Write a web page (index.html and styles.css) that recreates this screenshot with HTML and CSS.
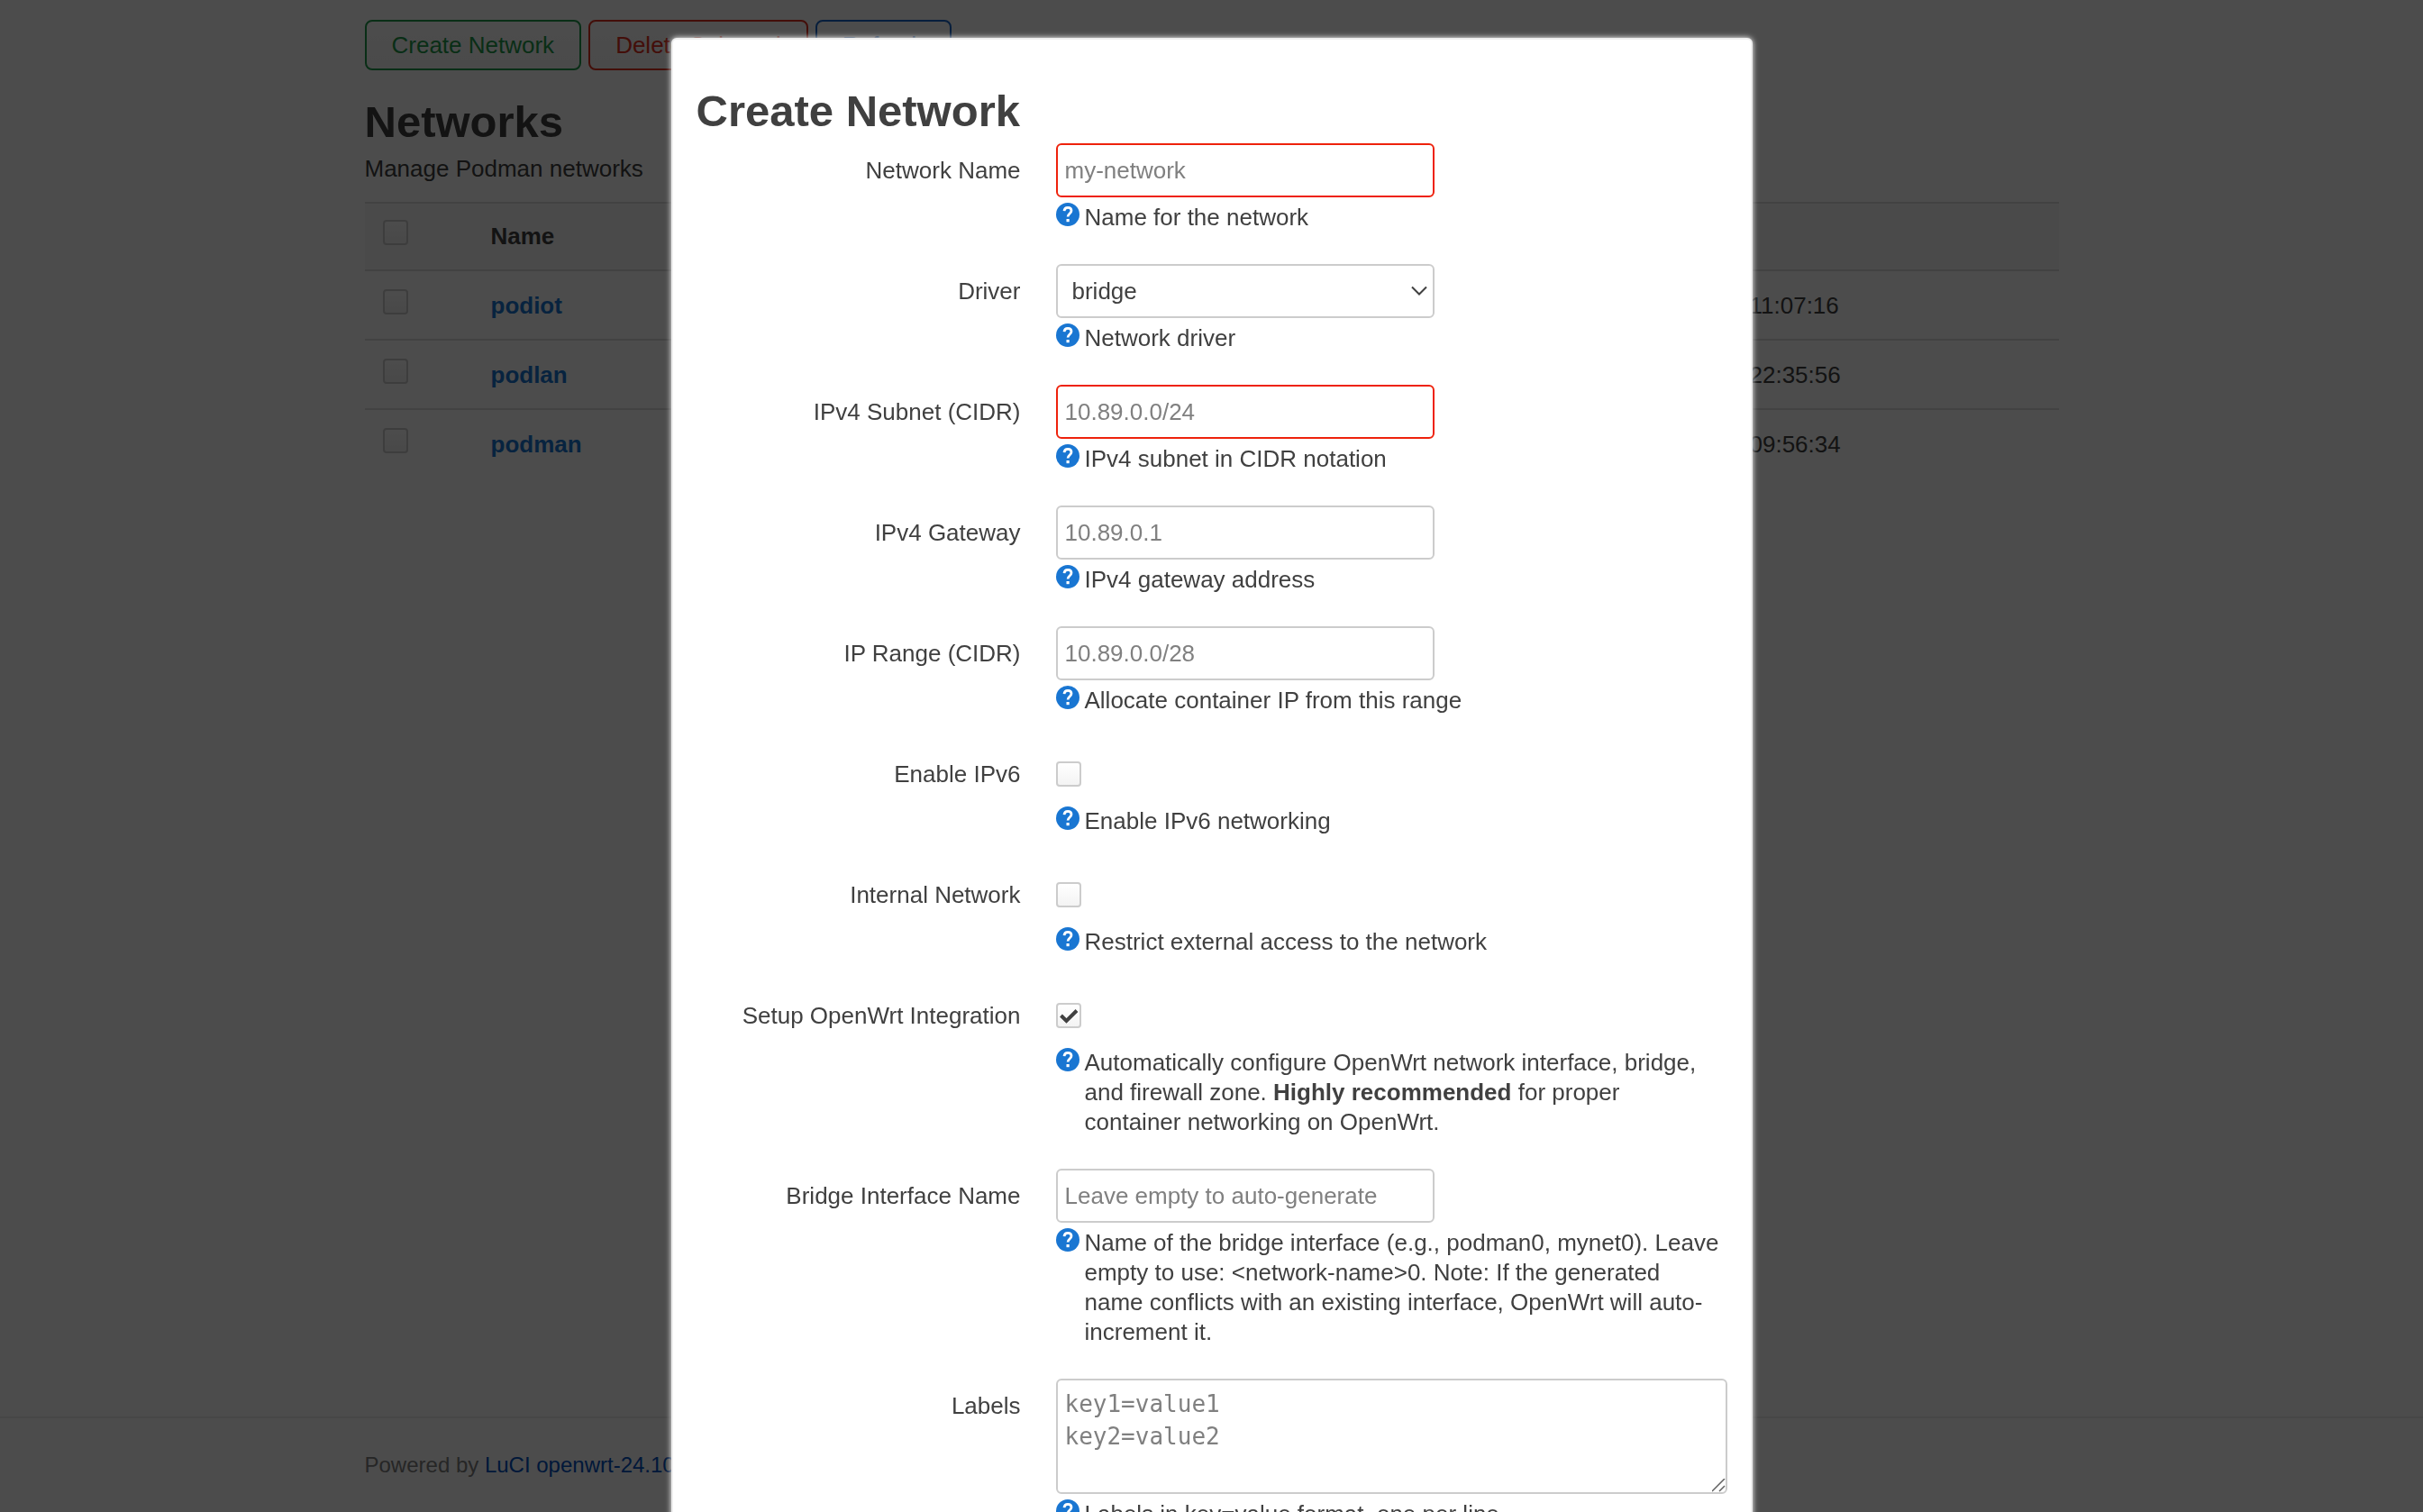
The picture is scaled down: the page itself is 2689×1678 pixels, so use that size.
FILE: index.html
```html
<!DOCTYPE html>
<html lang="en">
<head>
<meta charset="utf-8">
<title>Networks - LuCI</title>
<link rel="stylesheet" href="styles.css">
</head>
<body>
<svg class="sprite" aria-hidden="true">
  <symbol id="help" viewBox="0 0 26 26">
    <circle cx="13" cy="13" r="13" fill="#1976d2"/>
    <path d="M9 9.200C9.200 6.600 10.800 5.300 13 5.300c2.400 0 4 1.400 4 3.500 0 3.200-3.900 3.300-3.900 6.700" fill="none" stroke="#fff" stroke-width="2.800"/>
    <rect x="11.500" y="18" width="3.200" height="3.200" fill="#fff"/>
  </symbol>
</svg>

<main class="container">
  <div class="toolbar">
    <button class="btn btn-positive" type="button">Create Network</button>
    <button class="btn btn-negative" type="button">Delete Selected</button>
    <button class="btn btn-action" type="button">Refresh</button>
  </div>
  <h2 class="heading">Networks</h2>
  <p class="intro">Manage Podman networks</p>
  <table class="table">
    <thead>
      <tr><th class="col-check"><input class="check" type="checkbox" aria-label="Select all"></th><th class="col-name">Name</th><th></th></tr>
    </thead>
    <tbody>
      <tr><td><input class="check" type="checkbox" aria-label="Select podiot"></td><td><a class="net" href="#podiot">podiot</a></td><td class="time">11:07:16</td></tr>
      <tr><td><input class="check" type="checkbox" aria-label="Select podlan"></td><td><a class="net" href="#podlan">podlan</a></td><td class="time">22:35:56</td></tr>
      <tr><td><input class="check" type="checkbox" aria-label="Select podman"></td><td><a class="net" href="#podman">podman</a></td><td class="time">09:56:34</td></tr>
    </tbody>
  </table>
</main>

<footer class="footer">
  <div class="container">Powered by <a class="footer-link" href="#luci">LuCI openwrt-24.10</a></div>
</footer>

<div class="overlay">
  <form class="modal" role="dialog" aria-labelledby="dialog-title">
    <h2 class="heading" id="dialog-title">Create Network</h2>

    <div class="row">
      <label class="label" for="name">Network Name</label>
      <div class="field">
        <div class="control"><input class="input invalid" id="name" type="text" placeholder="my-network"></div>
        <div class="desc"><svg class="help"><use href="#help"/></svg><span>Name for the network</span></div>
      </div>
    </div>

    <div class="row">
      <label class="label" for="driver">Driver</label>
      <div class="field">
        <div class="control"><select class="input select" id="driver"><option>bridge</option></select></div>
        <div class="desc"><svg class="help"><use href="#help"/></svg><span>Network driver</span></div>
      </div>
    </div>

    <div class="row">
      <label class="label" for="subnet">IPv4 Subnet (CIDR)</label>
      <div class="field">
        <div class="control"><input class="input invalid" id="subnet" type="text" placeholder="10.89.0.0/24"></div>
        <div class="desc"><svg class="help"><use href="#help"/></svg><span>IPv4 subnet in CIDR notation</span></div>
      </div>
    </div>

    <div class="row">
      <label class="label" for="gateway">IPv4 Gateway</label>
      <div class="field">
        <div class="control"><input class="input" id="gateway" type="text" placeholder="10.89.0.1"></div>
        <div class="desc"><svg class="help"><use href="#help"/></svg><span>IPv4 gateway address</span></div>
      </div>
    </div>

    <div class="row">
      <label class="label" for="range">IP Range (CIDR)</label>
      <div class="field">
        <div class="control"><input class="input" id="range" type="text" placeholder="10.89.0.0/28"></div>
        <div class="desc"><svg class="help"><use href="#help"/></svg><span>Allocate container IP from this range</span></div>
      </div>
    </div>

    <div class="row">
      <label class="label" for="ipv6">Enable IPv6</label>
      <div class="field">
        <div class="control"><input class="check" id="ipv6" type="checkbox"></div>
        <div class="desc"><svg class="help"><use href="#help"/></svg><span>Enable IPv6 networking</span></div>
      </div>
    </div>

    <div class="row">
      <label class="label" for="internal">Internal Network</label>
      <div class="field">
        <div class="control"><input class="check" id="internal" type="checkbox"></div>
        <div class="desc"><svg class="help"><use href="#help"/></svg><span>Restrict external access to the network</span></div>
      </div>
    </div>

    <div class="row">
      <label class="label" for="integration">Setup OpenWrt Integration</label>
      <div class="field">
        <div class="control"><input class="check" id="integration" type="checkbox" checked></div>
        <div class="desc"><svg class="help"><use href="#help"/></svg><span>Automatically configure OpenWrt network interface, bridge, and firewall zone. <strong>Highly recommended</strong> for proper container networking on OpenWrt.</span></div>
      </div>
    </div>

    <div class="row">
      <label class="label" for="bridge">Bridge Interface Name</label>
      <div class="field">
        <div class="control"><input class="input" id="bridge" type="text" placeholder="Leave empty to auto-generate"></div>
        <div class="desc"><svg class="help"><use href="#help"/></svg><span>Name of the bridge interface (e.g., podman0, mynet0). Leave empty to use: &lt;network-name&gt;0. Note: If the generated name conflicts with an existing interface, OpenWrt will auto-increment it.</span></div>
      </div>
    </div>

    <div class="row">
      <label class="label" for="labels">Labels</label>
      <div class="field">
        <textarea class="input textarea" id="labels" rows="3" placeholder="key1=value1&#10;key2=value2"></textarea>
        <div class="desc"><svg class="help"><use href="#help"/></svg><span>Labels in key=value format, one per line</span></div>
      </div>
    </div>
  </form>
</div>
</body>
</html>
```
FILE: styles.css
```css
* { box-sizing: border-box; }

body {
  margin: 0;
  min-height: 100vh;
  display: flex;
  flex-direction: column;
  background: #fff;
  color: #404040;
  font: 26px/33px "Liberation Sans", Arial, sans-serif;
}

.sprite { position: absolute; width: 0; height: 0; }

.container {
  width: 100%;
  max-width: 1880px;
  margin: 0 auto;
}

.toolbar {
  display: flex;
  gap: 8px;
  padding-top: 22px;
}

.btn {
  height: 56px;
  padding: 0 28px;
  border: 2px solid;
  border-radius: 8px;
  background: linear-gradient(#fff, #f8f8f8);
  font: inherit;
}
.btn-positive { color: #1f9a4c; }
.btn-negative { color: #e0301e; }
.btn-action { color: #1a66c8; }

.heading {
  margin: 0;
  font-size: 49px;
  line-height: 72px;
}
.toolbar + .heading { margin-top: 21px; }

.intro { margin: 0 0 20px; }

.table {
  width: 100%;
  border-collapse: separate;
  border-spacing: 0;
  table-layout: fixed;
}
.table th,
.table td {
  padding: 20px 20px 18px;
  border-top: 2px solid #ddd;
  text-align: left;
  vertical-align: top;
  line-height: 37px;
}
.table th {
  padding-top: 18px;
  background: #f9f9f9;
}
.col-check { width: 120px; }
.col-name { width: 1397px; }
.table .check { display: block; }
.net { color: #1976d2; font-weight: bold; text-decoration: none; }

.footer {
  margin-top: auto;
  padding: 35px 0;
  border-top: 2px solid #eee;
  color: #808080;
  font-size: 24px;
  line-height: 34px;
}
.footer-link { color: #0050c0; text-decoration: none; }

.overlay {
  position: fixed;
  inset: 0;
  overflow-y: auto;
  scrollbar-width: none;
  padding: 42px 0;
  background: rgba(0, 0, 0, .7);
}

.modal {
  width: 90%;
  max-width: 1200px;
  margin: 0 auto;
  padding: 43px 26px 26px;
  border: 2px solid #eee;
  border-radius: 6px;
  background: #fff;
  box-shadow: 0 0 6px #fff;
}

.row {
  display: flex;
  gap: 39px;
  margin-bottom: 35px;
}
.label {
  flex: 0 0 360px;
  padding-top: 14px;
  text-align: right;
}
.field { flex: 1; min-width: 0; }
.control { display: flex; align-items: center; height: 60px; }

.input {
  width: 420px;
  height: 60px;
  padding: 0 8px;
  border: 2px solid #ccc;
  border-radius: 6px;
  background: #fff;
  color: #404040;
  font: inherit;
}
.input::placeholder { color: #808080; opacity: 1; }
.invalid { border-color: #ee220c; }

.select {
  appearance: none;
  padding: 0 16px;
  background: #fff url("data:image/svg+xml,%3Csvg xmlns='http://www.w3.org/2000/svg' width='18' height='12'%3E%3Cpath d='M1 1.500L9 9.500L17 1.500' fill='none' stroke='%23404040' stroke-width='2'/%3E%3C/svg%3E") no-repeat right 6px center;
}

.textarea {
  display: block;
  width: 100%;
  height: auto;
  padding: 8px;
  font: 26px/36px "DejaVu Sans Mono", monospace;
  resize: both;
}
.textarea::-webkit-resizer {
  background: url("data:image/svg+xml,%3Csvg xmlns='http://www.w3.org/2000/svg' width='15' height='15'%3E%3Cpath d='M0 14L14 0M8 14L14 8' fill='none' stroke='%23606060' stroke-width='1.500'/%3E%3C/svg%3E") no-repeat right bottom;
}

.check {
  appearance: none;
  width: 28px;
  height: 28px;
  margin: 0;
  border: 2px solid #ccc;
  border-radius: 4px;
  background: linear-gradient(#fff, #f3f3f3);
}
.check:checked {
  background: url("data:image/svg+xml,%3Csvg xmlns='http://www.w3.org/2000/svg' width='24' height='24'%3E%3Cpath d='M3.500 12L9.500 18L21 6.500' fill='none' stroke='%23404040' stroke-width='4'/%3E%3C/svg%3E") center no-repeat, linear-gradient(#fff, #f3f3f3);
}

.desc {
  display: flex;
  gap: 6px;
  margin-top: 6px;
  padding-right: 6px;
}
.help { flex: none; width: 26px; height: 26px; }
```
